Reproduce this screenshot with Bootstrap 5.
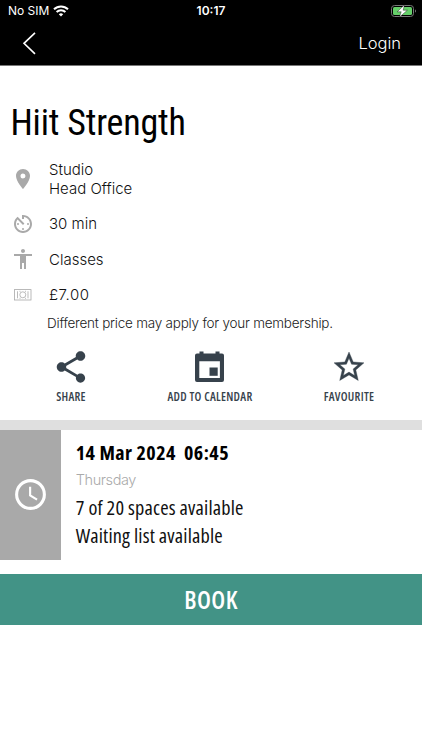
<!DOCTYPE html>
<html lang="en">
<head>
<meta charset="utf-8">
<meta name="viewport" content="width=device-width, initial-scale=1">
<title>Hiit Strength</title>
<link href="https://cdn.jsdelivr.net/npm/bootstrap@5.3.0/dist/css/bootstrap.min.css" rel="stylesheet">
<style>
body{font-family:Inter,"Liberation Sans",sans-serif;font-weight:300;color:#111;background:#fff;overflow:hidden;line-height:1.2}
svg{display:block;flex:none}
.app-head{height:66px;border-bottom:1px solid #777}
.status{height:22px;font-size:12px;font-weight:400}
.topbar{height:43px;padding:0 21px 0 17px}
.login{font-size:16.5px}
.side{width:140px}
.title{font:400 36px/44px Roboto,sans-serif;font-stretch:75%;letter-spacing:-.2px;color:#000;padding:35px 10.5px 6px}
.info{height:35.6px;font-size:15px;line-height:19px}
.info.tall{height:55px}
.price{letter-spacing:.5px}
.ic{width:38.300px;color:#a9a9a9}
.info-list{padding-left:10.700px}
.note{font-size:13.5px;line-height:20px;letter-spacing:-.23px;padding-left:47px;color:#222}
.actions{height:87.200px;padding:15px 3.500px 0 1.500px;color:#37424c}
.lbl{font:600 12px/16px "Open Sans",sans-serif;font-stretch:75%;letter-spacing:.28px;margin-top:3.500px}
.ic-box{height:38px}
.band{height:10px;background:#dfdfdf}
.clock{width:61px;height:130px;background:#a9a9a9;color:#fff}
.slot{padding:11.500px 0 0 14.700px}
.when{font:700 20px/24px "Open Sans",sans-serif;font-stretch:75%;letter-spacing:.46px;color:#000;white-space:pre}
.day{font-size:14.5px;line-height:29px;letter-spacing:-.4px;color:#aaa}
.avail{font:400 20.300px/27.500px "Open Sans",sans-serif;font-stretch:75%;letter-spacing:.16px;color:#111}
.book,.book:hover{height:51px;margin-top:14.400px;padding:0;background:#429386;color:#fff;font:600 24.500px/46px "Open Sans",sans-serif;font-stretch:75%;letter-spacing:.4px;border:0}
</style>
</head>
<body>
<header class="app-head bg-black text-white">
  <div class="status d-flex align-items-center justify-content-between">
    <div class="side d-flex align-items-center ps-2"><span>No SIM</span>
      <svg class="ms-1" width="16" height="12" viewBox="0 0 16 12" fill="none" stroke="#fff" stroke-width="2"><path d="M1 4.300a10 10 0 0 1 14 0M3.600 7a6.300 6.300 0 0 1 8.800 0"/><path d="M8 11.500 5.800 9.200a3.200 3.200 0 0 1 4.400 0z" fill="#fff" stroke="none"/></svg>
    </div>
    <div class="fw-semibold">10:17</div>
    <div class="side d-flex justify-content-end pe-1">
      <svg width="27" height="14" viewBox="0 0 27 14"><rect x=".5" y="1.500" width="22" height="11" rx="3" fill="none" stroke="#777"/><rect x="2" y="3" width="19" height="8" rx="1.500" fill="#65cf69"/><path d="M24 5.500v3c1.300-.4 1.300-2.600 0-3z" fill="#777"/><path d="M13.500 .8 6.200 7.800h4l-1.800 5.400 8-7h-4.200z" fill="#fff" stroke="#000" stroke-width=".4"/></svg>
    </div>
  </div>
  <nav class="topbar d-flex align-items-center justify-content-between">
    <svg width="24" height="24" viewBox="0 0 24 24" fill="none" stroke="#fff" stroke-width="1.600"><path d="M18 .8 7 11.300 18 21.800"/></svg>
    <span class="login">Login</span>
  </nav>
</header>
<main>
  <h1 class="title mb-0">Hiit Strength</h1>
  <div class="info-list">
    <div class="info tall d-flex align-items-center">
      <div class="ic"><svg width="24" height="24" viewBox="0 0 24 24" fill="currentColor"><path d="M12 2C8.130 2 5 5.130 5 9c0 5.250 7 13 7 13s7-7.750 7-13c0-3.870-3.130-7-7-7zm0 9.500a2.500 2.500 0 1 1 0-5 2.500 2.500 0 0 1 0 5z"/></svg></div>
      <div>Studio<br>Head Office</div>
    </div>
    <div class="info d-flex align-items-center">
      <div class="ic"><svg width="24" height="24" viewBox="0 0 24 24" fill="currentColor"><path d="M11 3v4h2V5.080c3.390.490 6 3.390 6 6.920 0 3.870-3.130 7-7 7s-7-3.130-7-7c0-1.680.590-3.220 1.580-4.420L12 13l1.410-1.410-6.800-6.800v.020C4.420 6.450 3 9.050 3 12c0 4.970 4.020 9 9 9 4.970 0 9-4.030 9-9s-4.030-9-9-9z"/><circle cx="12" cy="17" r="1"/><circle cx="17" cy="12" r="1"/><circle cx="7" cy="12" r="1"/></svg></div>
      <div>30 min</div>
    </div>
    <div class="info d-flex align-items-center">
      <div class="ic"><svg width="24" height="24" viewBox="0 0 24 24" fill="currentColor"><path d="M12 2c1.100 0 2 .9 2 2s-.9 2-2 2-2-.9-2-2 .9-2 2-2zm9 7h-6v13h-2v-6h-2v6H9V9H3V7h18v2z"/></svg></div>
      <div>Classes</div>
    </div>
    <div class="info d-flex align-items-center">
      <div class="ic"><svg width="24" height="24" viewBox="0 0 24 24" fill="none" stroke="currentColor" stroke-width=".8"><rect x="3.500" y="6.600" width="16.500" height="10.400"/><circle cx="11.800" cy="11.800" r="3"/><path d="M6.500 8.300v7M17 8.300v7M8.500 8.300h1M14 8.300h1M8.500 15.300h1M14 15.300h1"/></svg></div>
      <div class="price">£7.00</div>
    </div>
  </div>
  <div class="note">Different price may apply for your membership.</div>
  <div class="actions row g-0 text-center">
    <div class="col-4">
      <div class="ic-box d-flex align-items-center justify-content-center"><svg width="38" height="38" viewBox="0 0 24 24" fill="currentColor"><path d="M18 16.080c-.76 0-1.440.3-1.960.770L8.910 12.700c.050-.23.090-.46.090-.7s-.04-.47-.09-.7l7.050-4.110c.54.5 1.250.810 2.040.810 1.660 0 3-1.340 3-3s-1.340-3-3-3-3 1.340-3 3c0 .24.040.47.090.7L8.040 9.810C7.500 9.310 6.790 9 6 9c-1.660 0-3 1.340-3 3s1.340 3 3 3c.79 0 1.500-.31 2.040-.81l7.120 4.160c-.05.21-.08.430-.08.650 0 1.610 1.310 2.920 2.920 2.920s2.920-1.310 2.920-2.920-1.310-2.920-2.920-2.920z"/></svg></div>
      <div class="lbl">SHARE</div>
    </div>
    <div class="col-4">
      <div class="ic-box d-flex align-items-center justify-content-center"><svg width="29" height="32" viewBox="0 0 29 32" fill="currentColor"><path fill-rule="evenodd" d="M4.500 .5h4v2h12v-2h4v2H27a2 2 0 0 1 2 2V29a2 2 0 0 1-2 2H2a2 2 0 0 1-2-2V4.500a2 2 0 0 1 2-2h2.500zM4.300 10.200V27h20.600V10.200z"/><path d="M14.500 16.500h8.200v8.300h-8.200z"/></svg></div>
      <div class="lbl">ADD TO CALENDAR</div>
    </div>
    <div class="col-4">
      <div class="ic-box d-flex align-items-center justify-content-center"><svg width="36" height="36" viewBox="0 0 24 24" fill="currentColor" stroke="currentColor" stroke-width=".25"><path d="M22 9.240l-7.190-.62L12 2 9.190 8.630 2 9.240l5.460 4.730L5.820 21 12 17.270 18.180 21l-1.630-7.030L22 9.240zM12 15.400l-3.760 2.270 1-4.280-3.320-2.880 4.380-.38L12 6.100l1.710 4.040 4.380.380-3.320 2.880 1 4.280L12 15.400z"/></svg></div>
      <div class="lbl">FAVOURITE</div>
    </div>
  </div>
  <div class="band"></div>
  <section class="d-flex">
    <div class="clock d-flex align-items-center justify-content-center"><svg width="37" height="37" viewBox="0 0 24 24" fill="none" stroke="currentColor"><circle cx="12" cy="12" r="9" stroke-width="2"/><path d="M11.750 7v5.600l4.500 2.700" stroke-width="1.400"/></svg></div>
    <div class="slot">
      <div class="when">14 Mar 2024  06:45</div>
      <div class="day">Thursday</div>
      <div class="avail">7 of 20 spaces available</div>
      <div class="avail">Waiting list available</div>
    </div>
  </section>
  <button type="button" class="book btn rounded-0 w-100 d-block">BOOK</button>
</main>
<script src="https://cdn.jsdelivr.net/npm/bootstrap@5.3.0/dist/js/bootstrap.bundle.min.js"></script>
</body>
</html>
